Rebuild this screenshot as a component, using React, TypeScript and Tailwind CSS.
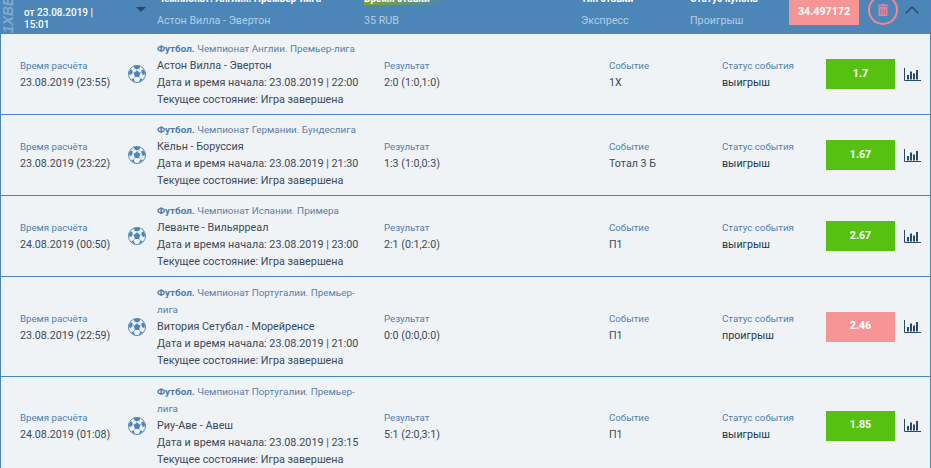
import React from 'react';
import { ChevronUp } from 'lucide-react';
import { FaTrashAlt } from 'react-icons/fa';

interface Bet {
  calcTime: string;
  league: string;
  teams: string;
  start: string;
  result: string;
  event: string;
  status: string;
  odds: string;
  won: boolean;
  height: string;
}

const bets: Bet[] = [
  { calcTime: '23.08.2019 (23:55)', league: 'Чемпионат Англии. Премьер-лига', teams: 'Астон Вилла - Эвертон', start: '23.08.2019 | 22:00', result: '2:0 (1:0,1:0)', event: '1Х', status: 'выигрыш', odds: '1.7', won: true, height: 'h-[81px]' },
  { calcTime: '23.08.2019 (23:22)', league: 'Чемпионат Германии. Бундеслига', teams: 'Кёльн - Боруссия', start: '23.08.2019 | 21:30', result: '1:3 (1:0,0:3)', event: 'Тотал 3 Б', status: 'выигрыш', odds: '1.67', won: true, height: 'h-[81px]' },
  { calcTime: '24.08.2019 (00:50)', league: 'Чемпионат Испании. Примера', teams: 'Леванте - Вильярреал', start: '23.08.2019 | 23:00', result: '2:1 (0:1,2:0)', event: 'П1', status: 'выигрыш', odds: '2.67', won: true, height: 'h-[81px]' },
  { calcTime: '23.08.2019 (22:59)', league: 'Чемпионат Португалии. Премьер-лига', teams: 'Витория Сетубал - Морейренсе', start: '23.08.2019 | 21:00', result: '0:0 (0:0,0:0)', event: 'П1', status: 'проигрыш', odds: '2.46', won: false, height: 'h-[100px]' },
  { calcTime: '24.08.2019 (01:08)', league: 'Чемпионат Португалии. Премьер-лига', teams: 'Риу-Аве - Авеш', start: '23.08.2019 | 23:15', result: '5:1 (2:0,3:1)', event: 'П1', status: 'выигрыш', odds: '1.85', won: true, height: 'h-[98px]' },
];

const SoccerBall = () => (
  <svg viewBox="0 0 20 20" className="w-[18px] h-[18px]">
    <circle cx="10" cy="10" r="9.500" fill="#eff3f6" stroke="#4c86b9" strokeWidth="1" />
    <path d="M10 6.200l3.700 2.700-1.400 4.300H7.700L6.300 8.900z" fill="#4c86b9" />
    <path d="M6.500 1.200L10 0.500l3.500 0.700-0.500 2.600L10 4.800 7 3.800zM0.800 8l2.400-3.400 2 1.500-0.700 3.800-2.500 1.500zM19.200 8l-2.400-3.400-2 1.500 0.700 3.800 2.500 1.500zM3.400 15.500l2.900-0.500 1.400 3.700-0.700 0.500zM16.600 15.500l-2.900-0.500-1.400 3.700 0.700 0.500z" fill="#4c86b9" />
    <path d="M10 6.200V4.800M6.300 8.900L5 7.500M13.700 8.900L15 7.500M7.700 13.200L6.300 15M12.300 13.200L13.700 15" stroke="#4c86b9" strokeWidth="0.700" />
  </svg>
);

const ChartIcon = () => (
  <svg viewBox="0 0 17 13" className="w-[17px] h-[13px]">
    <path d="M0.500 0v12.500H17" fill="none" stroke="#2a4a6b" strokeWidth="1" />
    <rect x="3" y="7" width="2" height="4.500" fill="#2a4a6b" />
    <rect x="6" y="3.500" width="2" height="8" fill="#2a4a6b" />
    <rect x="9" y="5.500" width="2" height="6" fill="#2a4a6b" />
    <rect x="12" y="2" width="2" height="9.500" fill="#2a4a6b" />
  </svg>
);

const BetRow = ({ bet }: { bet: Bet }) => (
  <div className={`flex items-center ${bet.height} pl-[19px] border-b border-[#4c86b9] text-[#3b4a59]`}>
    <div className="w-[108px] shrink-0">
      <div className="text-[9.700px] text-[#4f7fb0] leading-[17px]">Время расчёта</div>
      <div className="leading-[17px]">{bet.calcTime}</div>
    </div>
    <div className="w-[29px] shrink-0">
      <SoccerBall />
    </div>
    <div className="w-[227px] shrink-0 pr-[20px] text-[10.800px] leading-[17px]">
      <div className="text-[9.900px] text-[#5a7fa8]">
        <span className="font-bold text-[#4c7cab]">Футбол.</span> {bet.league}
      </div>
      <div>{bet.teams}</div>
      <div>Дата и время начала: {bet.start}</div>
      <div>Текущее состояние: Игра завершена</div>
    </div>
    <div className="w-[225px] shrink-0">
      <div className="text-[9.700px] text-[#4f7fb0] leading-[17px]">Результат</div>
      <div className="leading-[17px]">{bet.result}</div>
    </div>
    <div className="w-[113px] shrink-0">
      <div className="text-[9.700px] text-[#4f7fb0] leading-[17px]">Событие</div>
      <div className="leading-[17px]">{bet.event}</div>
    </div>
    <div className="w-[104px] shrink-0">
      <div className="text-[9.700px] text-[#4f7fb0] leading-[17px]">Статус события</div>
      <div className="leading-[17px] text-[#22384d]">{bet.status}</div>
    </div>
    <div className={`w-[69px] h-[30px] shrink-0 flex items-center justify-center font-bold text-white ${bet.won ? 'bg-[#57c111]' : 'bg-[#f69595]'}`}>
      {bet.odds}
    </div>
    <div className="ml-[9px]">
      <ChartIcon />
    </div>
  </div>
);

export default function App() {
  return (
    <div className="relative w-[931px] h-[468px] overflow-hidden bg-[#eff3f6] text-[10.700px] font-['Roboto',sans-serif]">
      <div className="relative flex h-[34px] overflow-hidden bg-[#4c86b9] pl-[24px]">
        <span className="absolute left-[2px] bottom-[1px] [writing-mode:vertical-rl] rotate-180 font-['Liberation_Sans',sans-serif] italic font-bold text-[14px] leading-[13px] text-white/30">1XBET</span>
        <div className="w-[133px] shrink-0 pt-[7px] pr-[40px] text-[10px] text-white font-medium leading-[12px]">от 23.08.2019 | 15:01</div>
        <div className="absolute left-[136px] top-[7px] border-x-[5px] border-t-[5px] border-x-transparent border-t-[#2a4a6b]"></div>
        <HeaderCol width="w-[207px]" label="Чемпионат. Англия. Премьер-лига" value="Астон Вилла - Эвертон" />
        <HeaderCol width="w-[217px]" label="Время ставки" value="35 RUB" highlight />
        <HeaderCol width="w-[109px]" label="Тип ставки" value="Экспресс" />
        <HeaderCol width="w-[99px]" label="Статус купона" value="Проигрыш" />
        <div className="w-[70px] h-[25px] shrink-0 flex items-center justify-center bg-[#f69595] text-white font-bold">34.497172</div>
        <div className="ml-[9px] mt-[-5px] w-[30px] h-[30px] shrink-0 flex items-center justify-center rounded-full border-2 border-[#f08a8f]">
          <FaTrashAlt className="text-[#f0808a] text-[12px]" />
        </div>
        <ChevronUp className="ml-[2px] mt-[-2px] w-[24px] h-[24px] text-[#2a4a6b]" strokeWidth={1.500} />
      </div>
      <div className="border-x border-[#4c86b9]">
        {bets.map((bet) => (
          <BetRow key={bet.calcTime} bet={bet} />
        ))}
      </div>
    </div>
  );
}

function HeaderCol({ width, label, value, highlight }: { width: string; label: string; value: string; highlight?: boolean }) {
  return (
    <div className={`${width} shrink-0 flex flex-col justify-end pb-[5px]`}>
      <div className={`w-fit text-white font-bold text-[10px] leading-[12px] mb-[7px] pr-[16px] whitespace-nowrap ${highlight ? 'bg-gradient-to-r from-[#7fa52a] to-transparent' : ''}`}>{label}</div>
      <div className="text-[#b5cde2] leading-[17px] whitespace-nowrap">{value}</div>
    </div>
  );
}
